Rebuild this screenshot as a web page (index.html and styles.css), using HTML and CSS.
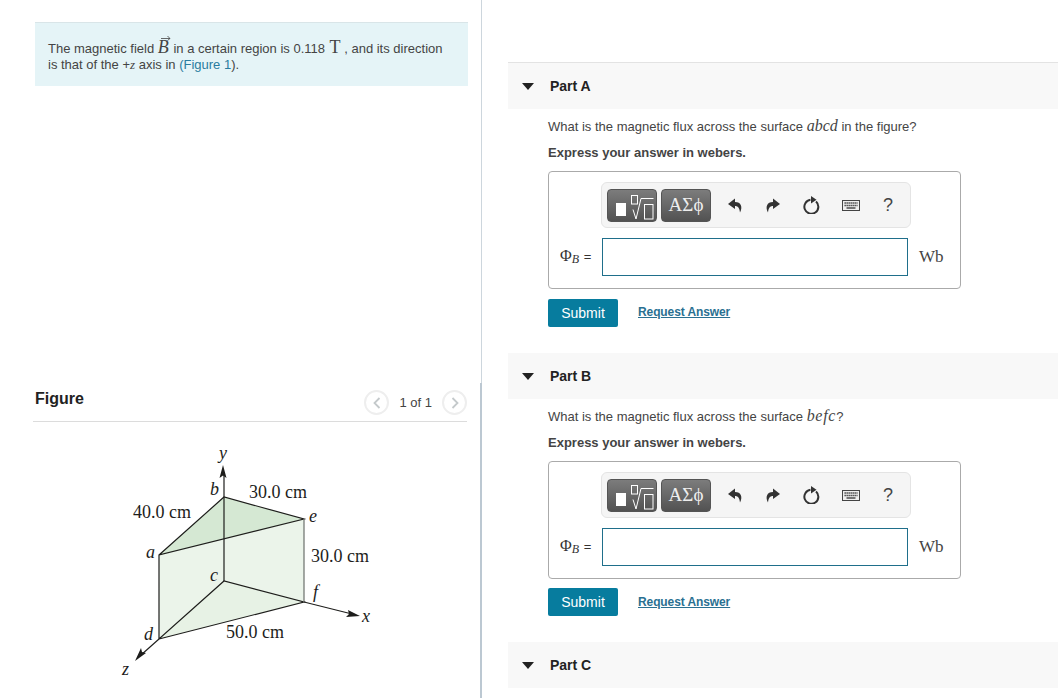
FILE: index.html
```html
<!DOCTYPE html>
<html lang="en">
<head>
<meta charset="utf-8">
<title>Magnetic flux</title>
<link rel="stylesheet" href="styles.css">
</head>
<body>
<main class="page">
  <section class="left">
    <div class="intro">
      <p>The magnetic field <span class="vec"><i class="m vec-b">B</i><svg class="vec-arrow" width="11" height="6" viewBox="0 0 11 6"><path d="M1 3.500H10M7.500 1L10 3.500L7.500 5.500" fill="none" stroke="#444" stroke-width="0.800"/></svg></span> in a certain region is 0.118 <span class="m unit-t">T</span> , and its direction<br>is that of the +<i class="m">z</i> axis in <a class="fig-link">(Figure 1</a>).</p>
    </div>
    <div class="fig-head">
      <h2>Figure</h2>
      <div class="pager">
        <span class="round"><svg width="8" height="12" viewBox="0 0 8 12"><path d="M6.500 1L1.500 6L6.500 11" fill="none" stroke="#c4c9cb" stroke-width="1.800"/></svg></span>
        <span class="count">1 of 1</span>
        <span class="round"><svg width="8" height="12" viewBox="0 0 8 12"><path d="M1.500 1L6.500 6L1.500 11" fill="none" stroke="#c4c9cb" stroke-width="1.800"/></svg></span>
      </div>
    </div>
    <svg class="diagram" width="290" height="250" viewBox="100 440 290 250">
      <polygon points="159,555 224,497 304,519" fill="#d5e8d3"/>
      <polygon points="159,555 304,519 304,602 224,581 159,639" fill="#ebf4ea"/>
      <polygon points="159,639 224,581 304,602" fill="#e7f2e5"/>
      <g fill="none" stroke="#1d1d1b" stroke-width="1.200">
        <path d="M159 555L224 497L304 519L159 555V639L224 581L304 602L159 639"/>
        <path d="M224 581V472"/>
        <path d="M304 519V602" stroke="#6b6f6b"/>
        <path d="M304 602L352 614"/>
        <path d="M159 639L141 655"/>
      </g>
      <g fill="#1d1d1b">
        <path d="M223 465L226.500 478L223 475.500L219.500 478Z"/>
        <path d="M360 616L346 617L349 614L348 610Z"/>
        <path d="M135 661L141 648L142 652L146 653Z"/>
      </g>
      <g class="dim">
        <text x="249" y="498">30.0 cm</text>
        <text x="133" y="518">40.0 cm</text>
        <text x="311" y="562">30.0 cm</text>
        <text x="226" y="638">50.0 cm</text>
      </g>
      <g class="pt">
        <text x="219" y="459">y</text>
        <text x="210" y="495">b</text>
        <text x="309" y="522">e</text>
        <text x="146" y="558">a</text>
        <text x="210" y="581">c</text>
        <text x="313" y="598">f</text>
        <text x="144" y="640">d</text>
        <text x="362" y="622">x</text>
        <text x="122" y="675">z</text>
      </g>
    </svg>
  </section>
  <div class="rule"><span class="rule-top"></span><span class="rule-bottom"></span></div>
  <section class="right">
    <article class="part">
      <header class="part-head"><span class="caret"></span><h3>Part A</h3></header>
      <div class="part-body">
        <p class="q">What is the magnetic flux across the surface <i class="m big">abcd</i> in the figure?</p>
        <p class="hint">Express your answer in webers.</p>
        <div class="answer">
          <div class="toolbar">
            <span class="tbtn tbtn-math"><span class="sq-solid"></span><svg class="root" width="24" height="25" viewBox="0 0 24 25"><path d="M3 14.500L6 24L11 3.500H23.500" fill="none" stroke="#fff" stroke-width="1"/><rect x="1.500" y="0.500" width="6" height="8.500" fill="none" stroke="#fff"/><rect x="14.500" y="9.500" width="8.500" height="14.500" fill="none" stroke="#fff"/></svg></span>
            <span class="tbtn tbtn-sym">ΑΣϕ</span>
            <span class="tools">
              <svg width="15" height="15" viewBox="0 0 15 15"><path d="M7 0.500L0 6L7 11V8C10 8 11.500 10 12 14.500C15 9 13 4 7 4Z" fill="#333"/></svg>
              <svg width="15" height="15" viewBox="0 0 15 15"><path d="M8 0.500L15 6L8 11V8C5 8 3.500 10 3 14.500C0 9 2 4 8 4Z" fill="#333"/></svg>
              <svg width="17" height="18" viewBox="0 0 17 18"><path d="M7.500 3.800A7 7 0 1 0 13 5.500" fill="none" stroke="#333" stroke-width="2"/><path d="M8 0L13.500 3.800L8 7.500Z" fill="#333"/></svg>
              <svg width="18" height="11" viewBox="0 0 18 11"><rect x="0.500" y="0.500" width="17" height="10" fill="#eee" stroke="#444"/><path d="M2.500 3H15.500M2.500 5.500H15.500" stroke="#333" stroke-width="1.300" stroke-dasharray="1.300 .7"/><path d="M4.500 8H13.500" stroke="#333" stroke-width="1.300"/></svg>
              <span class="qm">?</span>
            </span>
          </div>
          <div class="entry">
            <span class="lbl"><span class="m phi">Φ<i class="sub">B</i></span> =</span>
            <span class="field"></span>
            <span class="unit m">Wb</span>
          </div>
        </div>
        <div class="actions"><span class="submit">Submit</span><a class="req">Request Answer</a></div>
      </div>
    </article>
    <article class="part">
      <header class="part-head"><span class="caret"></span><h3>Part B</h3></header>
      <div class="part-body">
        <p class="q">What is the magnetic flux across the surface <i class="m big wide">befc</i>?</p>
        <p class="hint">Express your answer in webers.</p>
        <div class="answer">
          <div class="toolbar">
            <span class="tbtn tbtn-math"><span class="sq-solid"></span><svg class="root" width="24" height="25" viewBox="0 0 24 25"><path d="M3 14.500L6 24L11 3.500H23.500" fill="none" stroke="#fff" stroke-width="1"/><rect x="1.500" y="0.500" width="6" height="8.500" fill="none" stroke="#fff"/><rect x="14.500" y="9.500" width="8.500" height="14.500" fill="none" stroke="#fff"/></svg></span>
            <span class="tbtn tbtn-sym">ΑΣϕ</span>
            <span class="tools">
              <svg width="15" height="15" viewBox="0 0 15 15"><path d="M7 0.500L0 6L7 11V8C10 8 11.500 10 12 14.500C15 9 13 4 7 4Z" fill="#333"/></svg>
              <svg width="15" height="15" viewBox="0 0 15 15"><path d="M8 0.500L15 6L8 11V8C5 8 3.500 10 3 14.500C0 9 2 4 8 4Z" fill="#333"/></svg>
              <svg width="17" height="18" viewBox="0 0 17 18"><path d="M7.500 3.800A7 7 0 1 0 13 5.500" fill="none" stroke="#333" stroke-width="2"/><path d="M8 0L13.500 3.800L8 7.500Z" fill="#333"/></svg>
              <svg width="18" height="11" viewBox="0 0 18 11"><rect x="0.500" y="0.500" width="17" height="10" fill="#eee" stroke="#444"/><path d="M2.500 3H15.500M2.500 5.500H15.500" stroke="#333" stroke-width="1.300" stroke-dasharray="1.300 .7"/><path d="M4.500 8H13.500" stroke="#333" stroke-width="1.300"/></svg>
              <span class="qm">?</span>
            </span>
          </div>
          <div class="entry">
            <span class="lbl"><span class="m phi">Φ<i class="sub">B</i></span> =</span>
            <span class="field"></span>
            <span class="unit m">Wb</span>
          </div>
        </div>
        <div class="actions"><span class="submit">Submit</span><a class="req">Request Answer</a></div>
      </div>
    </article>
    <article class="part part-last">
      <header class="part-head"><span class="caret"></span><h3>Part C</h3></header>
    </article>
  </section>
</main>
</body>
</html>
```

FILE: styles.css
```css
* { box-sizing: border-box; }
html, body { margin: 0; padding: 0; height: 100%; overflow: hidden; background: #fff; }
body { font-family: "Liberation Sans", Arial, sans-serif; font-size: 13px; color: #333; }
p, h2, h3 { margin: 0; }
.page { display: flex; width: 1058px; height: 698px; overflow: hidden; }
.left { flex: none; width: 480px; height: 698px; padding: 22px 12px 0 35px; }
.rule { flex: none; display: flex; flex-direction: column; align-items: flex-end; width: 2px; height: 698px; }
.rule-top { width: 1px; height: 383px; background: #cdd6dd; }
.rule-bottom { width: 2px; height: 315px; background: #bcc8d2; }
.intro {
  height: 64px; padding: 15px 13px 0; line-height: 16px; color: #444;
  background: #e5f4f7; border-top: 1px solid #d9e5e8;
}
.m { font-family: "Liberation Serif", serif; }
.big { font-size: 16px; }
.wide { letter-spacing: 0.7px; }
.vec { position: relative; display: inline-block; line-height: 1; }
.vec-b { font-size: 18px; padding-right: 1px; }
.vec-arrow { position: absolute; left: 2px; top: -3px; }
.unit-t { font-size: 18px; line-height: 1; padding-left: 1px; }
.fig-link { color: #2a7c9f; }
.fig-head {
  display: flex; justify-content: space-between; align-items: flex-end;
  height: 52px; margin: 284px 1px 0 -2px; padding: 0 0 6px 2px;
  border-bottom: 1px solid #dcdcdc;
}
.fig-head h2 { font-size: 16px; line-height: 18px; font-weight: bold; color: #222; margin-bottom: 7px; }
.pager { display: flex; align-items: center; gap: 10px; }
.round {
  display: flex; align-items: center; justify-content: center;
  width: 25px; height: 25px; border: 2px solid #eeeeee; border-radius: 50%;
}
.count { font-size: 13px; color: #444; }
.diagram { display: block; margin: 18px 0 0 65px; }
.dim text { font: 18px "Liberation Serif", serif; fill: #1d1d1b; }
.pt text { font: italic 18px "Liberation Serif", serif; fill: #1d1d1b; }
.right { flex: 1; padding: 63px 0 0 26px; display: flex; flex-direction: column; }
.part { height: 290px; flex: none; }
.part:nth-child(2) { height: 289px; }
.part:nth-child(2) .actions { margin-top: 9px; }
.part:nth-child(2) .req { margin-top: 0; }
.part-last { height: 46px; }
.part-head {
  display: flex; align-items: center; height: 46px; padding-left: 14px;
  background: #f8f8f8;
}
.part:first-child .part-head { box-shadow: 0 -1px 0 #e3e3e3; }
.part-head h3 { font-size: 14px; font-weight: bold; color: #222; margin-left: 16px; }
.caret {
  width: 0; height: 0;
  border-left: 6px solid transparent; border-right: 6px solid transparent; border-top: 7px solid #222;
}
.part-body { padding: 9px 0 0 40px; width: 453px; }
.q { font-size: 13px; line-height: 16px; color: #444; }
.hint { font-size: 13px; font-weight: bold; line-height: 16px; margin-top: 10px; color: #444; }
.answer {
  width: 413px; height: 118px; margin-top: 10px; padding: 10px 0 0 52px;
  border: 1px solid #aaa; border-radius: 4px;
}
.toolbar {
  display: flex; align-items: center; gap: 4px; width: 310px; height: 46px; padding-left: 5px;
  background: #f5f5f5; border: 1px solid #e4e4e4; border-radius: 6px;
}
.tbtn {
  display: flex; align-items: center; justify-content: center; width: 50px; height: 33px;
  background: linear-gradient(#7c7c7c, #525252); border: 1px solid #555; border-radius: 4px; color: #eee;
}
.tbtn-sym { font: 19px "Liberation Serif", serif; }
.tbtn-math { gap: 4px; justify-content: flex-start; padding-left: 8px; }
.sq-solid { flex: none; width: 10px; height: 13px; background: #fff; margin-top: 8px; }
.root { flex: none; margin-top: 4px; }
.tools { display: flex; align-items: center; justify-content: space-between; width: 165px; margin-left: 13px; }
.qm { font-size: 18px; line-height: 1; color: #444; }
.entry { display: flex; align-items: center; margin-top: 10px; margin-left: -41px; }
.lbl { width: 42px; font-size: 13px; white-space: nowrap; color: #333; padding-bottom: 2px; word-spacing: 1px; }
.phi { font-size: 16px; }
.sub { font-size: 12px; position: relative; top: 2px; }
.field { width: 306px; height: 38px; background: #fff; border: 1px solid #1f6f8b; }
.unit { margin-left: 11px; font-size: 17px; color: #444; }
.actions { display: flex; align-items: center; gap: 20px; margin-top: 10px; }
.submit {
  display: flex; align-items: center; justify-content: center; width: 70px; height: 28px;
  background: #077c9e; color: #fff; font-size: 14px; border-radius: 2px;
}
.req { color: #2a7091; font-size: 12px; font-weight: bold; letter-spacing: -0.1px; text-decoration: underline; margin-top: -2px; }
```
